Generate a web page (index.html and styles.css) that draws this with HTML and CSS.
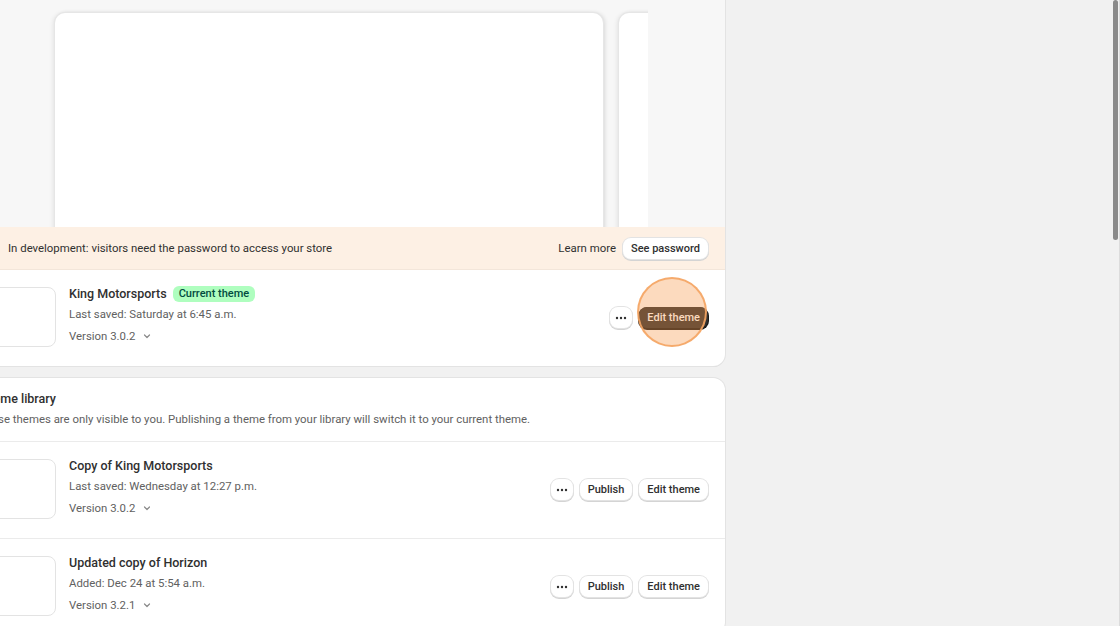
FILE: index.html
```html
<!DOCTYPE html>
<html lang="en">
<head>
    <meta charset="UTF-8">
    <meta name="viewport" content="width=device-width, initial-scale=1.0">
    <title>Themes</title>
    <link rel="stylesheet" href="styles.css">
</head>
<body>
    <div class="page">
        <!-- Current theme -->
        <section class="card">
            <div class="preview-area">
                <div class="preview-strip">
                    <div class="preview-frame"></div>
                    <div class="preview-frame"></div>
                </div>
            </div>

            <div class="banner">
                <span class="banner-text">In development: visitors need the password to access your store</span>
                <div class="banner-actions">
                    <a class="link" href="#">Learn more</a>
                    <button class="btn">See password</button>
                </div>
            </div>

            <div class="theme-row">
                <div class="thumb"></div>
                <div class="theme-info">
                    <div class="theme-name">King Motorsports <span class="badge">Current theme</span></div>
                    <div class="theme-meta">Last saved: Saturday at 6:45 a.m.</div>
                    <div class="theme-version">Version 3.0.2 <svg width="12" height="12" viewBox="0 0 12 12"><path d="M3.5 5l2.5 2.5L8.5 5" fill="none" stroke="#8a8a8a" stroke-width="1.2" stroke-linecap="round" stroke-linejoin="round"/></svg></div>
                </div>
                <div class="theme-actions">
                    <button class="btn btn-icon"><svg width="12" height="4" viewBox="0 0 12 4"><circle cx="2" cy="2" r="1.2" fill="#303030"/><circle cx="6" cy="2" r="1.2" fill="#303030"/><circle cx="10" cy="2" r="1.2" fill="#303030"/></svg></button>
                    <button class="btn btn-primary">Edit theme</button>
                    <span class="spotlight"></span>
                </div>
            </div>
        </section>

        <!-- Theme library -->
        <section class="card">
            <div class="card-header">
                <h2>Theme library</h2>
                <p>These themes are only visible to you. Publishing a theme from your library will switch it to your current theme.</p>
            </div>

            <div class="theme-row">
                <div class="thumb"></div>
                <div class="theme-info">
                    <div class="theme-name">Copy of King Motorsports</div>
                    <div class="theme-meta">Last saved: Wednesday at 12:27 p.m.</div>
                    <div class="theme-version">Version 3.0.2 <svg width="12" height="12" viewBox="0 0 12 12"><path d="M3.5 5l2.5 2.5L8.5 5" fill="none" stroke="#8a8a8a" stroke-width="1.2" stroke-linecap="round" stroke-linejoin="round"/></svg></div>
                </div>
                <div class="theme-actions">
                    <button class="btn btn-icon"><svg width="12" height="4" viewBox="0 0 12 4"><circle cx="2" cy="2" r="1.2" fill="#303030"/><circle cx="6" cy="2" r="1.2" fill="#303030"/><circle cx="10" cy="2" r="1.2" fill="#303030"/></svg></button>
                    <button class="btn">Publish</button>
                    <button class="btn">Edit theme</button>
                </div>
            </div>

            <div class="theme-row">
                <div class="thumb"></div>
                <div class="theme-info">
                    <div class="theme-name">Updated copy of Horizon</div>
                    <div class="theme-meta">Added: Dec 24 at 5:54 a.m.</div>
                    <div class="theme-version">Version 3.2.1 <svg width="12" height="12" viewBox="0 0 12 12"><path d="M3.5 5l2.5 2.5L8.5 5" fill="none" stroke="#8a8a8a" stroke-width="1.2" stroke-linecap="round" stroke-linejoin="round"/></svg></div>
                </div>
                <div class="theme-actions">
                    <button class="btn btn-icon"><svg width="12" height="4" viewBox="0 0 12 4"><circle cx="2" cy="2" r="1.2" fill="#303030"/><circle cx="6" cy="2" r="1.2" fill="#303030"/><circle cx="10" cy="2" r="1.2" fill="#303030"/></svg></button>
                    <button class="btn">Publish</button>
                    <button class="btn">Edit theme</button>
                </div>
            </div>
        </section>
    </div>

    <div class="scrollbar"><div class="scrollbar-thumb"></div></div>
</body>
</html>
```

FILE: styles.css
```css
body { margin: 0; background: #f1f1f1; font-family: Roboto, "Noto Sans", sans-serif; font-size: 11.4px; color: #303030; overflow: hidden; height: 626px; }
.page { width: 765px; margin: -20px 0 0 -40px; display: flex; flex-direction: column; gap: 12px; }
.card { background: #fff; border-radius: 12px; overflow: hidden; box-shadow: 0 0 0 1px #e3e3e3, 0 1px 0 #d4d4d4; }

/* preview */
.preview-area { background: #f7f7f7; height: 247px; overflow: hidden; }
.preview-strip { display: flex; gap: 15px; width: 603px; margin-left: 85px; padding: 33px 0 0 10px; box-sizing: border-box; overflow: hidden; }
.preview-frame { flex: 0 0 548px; height: 260px; background: #fff; border-radius: 10px 10px 0 0; box-shadow: 0 0 0 1px #e6e6e6, 2px 0 4px rgba(0,0,0,.12), -2px 0 4px rgba(0,0,0,.08); }
.preview-frame + .preview-frame { margin-left: 1px; }

/* banner */
.banner { background: #fdf0e4; height: 42px; display: flex; align-items: center; justify-content: space-between; padding: 0 17px 0 48px; border-bottom: 1px solid #f3e6da; }
.banner-actions { display: flex; align-items: center; gap: 7px; }
.link { color: #303030; text-decoration: none; }

/* buttons */
.btn { font-family: inherit; font-size: 11px; font-weight: 500; color: #303030; background: #fff; border: 0; border-radius: 8px; height: 21px; padding: 0 8px; box-shadow: 0 0 0 1px #e3e3e3, 0 1px 0 1px #d4d4d4; cursor: pointer; }
.btn-icon { width: 22px; padding: 0; display: flex; align-items: center; justify-content: center; }
.btn-primary { background: #303030; color: #fff; box-shadow: 0 1px 0 1px #1a1a1a; }

/* rows */
.theme-row { display: flex; align-items: flex-start; padding: 17px 17px 0 16px; height: 96px; box-sizing: border-box; border-top: 1px solid #ebebeb; }
.banner + .theme-row { border-top: 0; }
.card-header + .theme-row { height: 97px; }
.thumb { flex: 0 0 80px; height: 60px; box-sizing: border-box; border: 1px solid #e3e3e3; border-radius: 8px; }
.theme-info { flex: 1; margin: -3px 0 0 13px; }
.theme-name { font-size: 12.5px; font-weight: 500; line-height: 20px; display: flex; align-items: center; gap: 6px; }
.badge { font-size: 11px; font-weight: 500; background: #affebf; color: #014b40; border-radius: 6px; padding: 1px 6px; line-height: 14px; }
.theme-meta { color: #616161; line-height: 20px; }
.theme-version { color: #616161; line-height: 22px; margin-top: 1px; display: flex; align-items: center; gap: 6px; }
.theme-actions { position: relative; display: flex; align-items: center; gap: 7px; margin-top: 20px; }
.spotlight { position: absolute; right: 1px; top: -30px; width: 66px; height: 66px; border-radius: 50%; background: rgba(245,150,70,.35); border: 2px solid rgba(245,165,100,.9); pointer-events: none; }

/* library header */
.card-header { padding: 11px 16px 12px 19px; }
.card-header h2 { margin: 0; font-size: 12.5px; font-weight: 500; line-height: 20px; }
.card-header p { margin: 0; color: #616161; line-height: 20px; }

/* fake scrollbar */
.scrollbar { position: fixed; top: 0; right: 0; width: 7px; height: 626px; border-right: 1px solid #dcdcdc; box-sizing: border-box; }
.scrollbar-thumb { width: 5px; height: 240px; border-radius: 3px; background: #8a8a8a; }
```
